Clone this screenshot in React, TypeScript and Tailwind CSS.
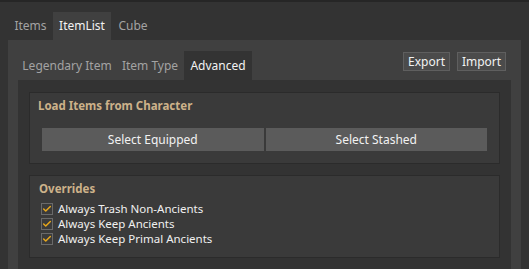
import { Check } from 'lucide-react'

const overrides = [
  'Always Trash Non-Ancients',
  'Always Keep Ancients',
  'Always Keep Primal Ancients',
]

function CheckRow({ label }: { label: string }) {
  return (
    <div className="flex h-[15px] items-center gap-[5px]">
      <span className="flex h-[12px] w-[12px] shrink-0 items-center justify-center border border-[#6a6a6a] bg-[#3b3b3b]">
        <Check className="h-[10px] w-[10px] text-[#e8a81c]" strokeWidth={3.5} />
      </span>
      <span className="text-[11.5px] leading-[15px] text-[#f0f0f0]">{label}</span>
    </div>
  )
}

export default function App() {
  return (
    <div
      className="h-[269px] w-[529px] overflow-hidden bg-[#333333]"
      style={{ fontFamily: '"Noto Sans", "Open Sans", sans-serif' }}
    >
      <div className="h-[2px] bg-[#262626]" />

      <div className="flex h-[38px] items-end pl-[8px] text-[12px]">
        <div className="flex h-[28px] w-[45px] items-center justify-center text-[#a3a3a3]">
          Items
        </div>
        <div className="flex h-[28px] w-[58px] items-center justify-center bg-[#404040] text-[#f2f2f2]">
          ItemList
        </div>
        <div className="flex h-[28px] w-[44px] items-center justify-center text-[#a3a3a3]">
          Cube
        </div>
      </div>

      <div className="mx-[8px] h-[300px] bg-[#404040] px-[10px]">
        <div className="flex h-[40px] items-end text-[12px]">
          <div className="flex h-[29px] w-[98px] items-center justify-center text-[#a3a3a3]">
            Legendary Item
          </div>
          <div className="flex h-[29px] w-[68px] items-center justify-center text-[#a3a3a3]">
            Item Type
          </div>
          <div className="flex h-[29px] w-[68px] items-center justify-center bg-[#333333] text-[#f2f2f2]">
            Advanced
          </div>
          <div className="ml-auto mb-[9px] mr-[5px] flex gap-[7px]">
            <button
              type="button"
              className="h-[19px] w-[47px] border border-[#5f5f5f] bg-[#4b4b4b] text-[12px] leading-none text-[#f2f2f2]"
            >
              Export
            </button>
            <button
              type="button"
              className="h-[19px] w-[49px] border border-[#5f5f5f] bg-[#4b4b4b] text-[12px] leading-none text-[#f2f2f2]"
            >
              Import
            </button>
          </div>
        </div>

        <div className="flex h-[260px] flex-col gap-[11px] bg-[#333333] px-[11px] pt-[12px]">
          <div className="h-[72px] border border-[#2b2b2b] bg-[#3a3a3a] px-[12px]">
            <div className="-ml-[4px] mt-[5px] text-[11.5px] font-bold leading-[16px] text-[#cdb28a]">
              Load Items from Character
            </div>
            <div className="mt-[14px] flex gap-[2px]">
              <button
                type="button"
                className="h-[23px] w-[222px] bg-[#5b5b5b] text-[12px] text-[#f2f2f2]"
              >
                Select Equipped
              </button>
              <button
                type="button"
                className="h-[23px] w-[222px] bg-[#5b5b5b] text-[12px] text-[#f2f2f2]"
              >
                Select Stashed
              </button>
            </div>
          </div>

          <div className="h-[83px] border border-[#2b2b2b] bg-[#3a3a3a] px-[11px]">
            <div className="-ml-[2px] mt-[5px] text-[11.5px] font-bold leading-[16px] text-[#cdb28a]">
              Overrides
            </div>
            <div className="mt-[4px] flex flex-col">
              {overrides.map((label) => (
                <CheckRow key={label} label={label} />
              ))}
            </div>
          </div>
        </div>
      </div>
    </div>
  )
}
